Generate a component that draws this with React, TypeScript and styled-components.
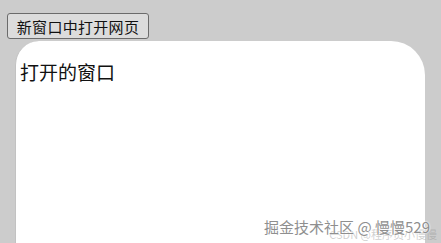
import styled, { createGlobalStyle } from 'styled-components';

const GlobalStyle = createGlobalStyle`
  html, body {
    margin: 0;
    padding: 0;
    background: #cccccc;
    overflow: hidden;
  }
  body {
    font-family: "Noto Sans CJK SC", "Liberation Sans", sans-serif;
  }
`;

const Page = styled.div`
  position: relative;
  width: 441px;
  height: 243px;
  display: flex;
  flex-direction: column;
  padding: 13px 0 0 0;
  box-sizing: border-box;
  overflow: hidden;
`;

const OpenButton = styled.button`
  align-self: flex-start;
  margin-left: 7px;
  width: 142px;
  height: 26px;
  padding: 0;
  font-family: "Noto Sans CJK SC", sans-serif;
  font-size: 15px;
  letter-spacing: 0.3px;
  line-height: 1;
  color: #111;
  background: #dcdcdc;
  border: 1px solid #6b6b6b;
  border-radius: 3px;
`;

const Window = styled.div`
  margin: 2px 0 0 15px;
  width: 410px;
  flex: 1;
  background: #ffffff;
  border-left: 1px solid #c2c2c2;
  border-radius: 24px 34px 0 0;
  padding: 18px 0 0 4px;
  box-sizing: border-box;
`;

const WindowTitle = styled.div`
  font-size: 19px;
  color: #111;
  line-height: 26px;
`;

const Watermark = styled.div`
  position: absolute;
  right: 11px;
  bottom: 6px;
  font-size: 15px;
  line-height: 20px;
  color: #8f8f8f;
  text-shadow: 0 0 2px #fff, 0 0 2px #fff;
  white-space: nowrap;
`;

const SubMark = styled.div`
  position: absolute;
  right: 4px;
  bottom: 1px;
  font-size: 11px;
  color: rgba(150, 150, 150, 0.45);
  white-space: nowrap;
`;

export default function App() {
  return (
    <Page>
      <GlobalStyle />
      <OpenButton>新窗口中打开网页</OpenButton>
      <Window>
        <WindowTitle>打开的窗口</WindowTitle>
      </Window>
      <SubMark>CSDN @程序员小慢慢</SubMark>
      <Watermark>掘金技术社区 @ 慢慢529</Watermark>
    </Page>
  );
}
